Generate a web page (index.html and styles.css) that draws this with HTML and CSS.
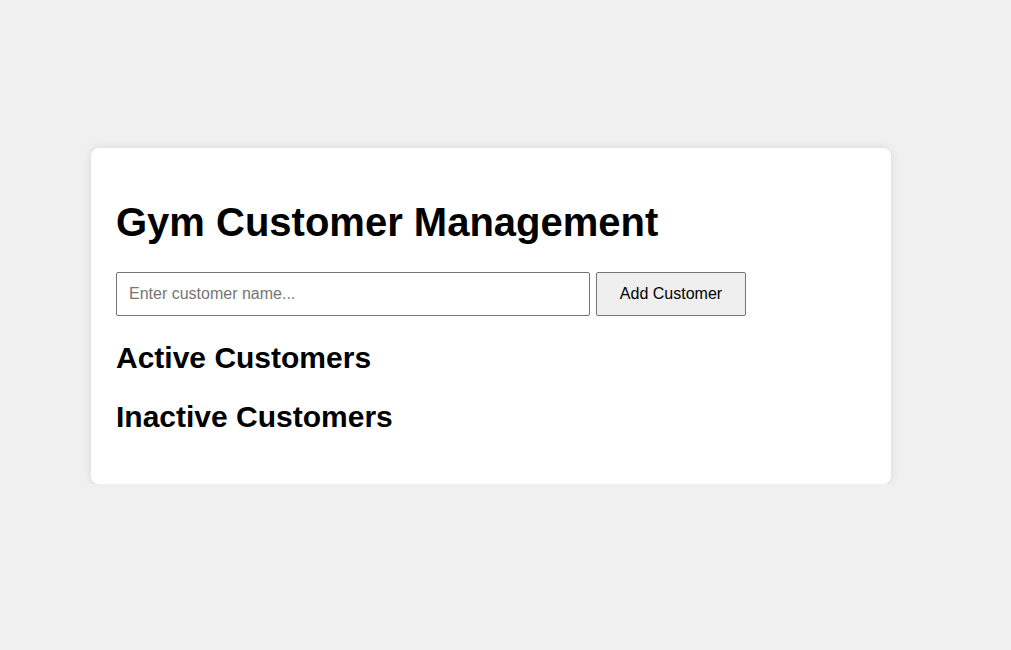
FILE: index.html
```html
<!DOCTYPE html>
<html>
<head>
<meta charset="utf-8">
<link rel="stylesheet" href="styles.css">
</head>
<body>
<div class="card">
  <h1>Gym Customer Management</h1>
  <div class="add-row">
    <input class="name-input" type="text" placeholder="Enter customer name...">
    <button class="add-btn">Add Customer</button>
  </div>
  <h2>Active Customers</h2>
  <h2>Inactive Customers</h2>
</div>
</body>
</html>
```
FILE: styles.css
```css
html, body {
  margin: 0;
  padding: 0;
  background: #f0f0f0;
  font-family: "Liberation Sans", Arial, sans-serif;
}
body {
  padding: 148px 0 0 91px;
}
.card {
  width: 750px;
  padding: 25px;
  background: #fff;
  border-radius: 8px;
  box-shadow: 0 0 10px rgba(0,0,0,0.1);
}
h1 {
  font-size: 40px;
  margin: 27px 0 27px;
}
.add-row {
  display: flex;
  gap: 6px;
}
.name-input {
  width: 448px;
  padding: 12px;
  font-size: 16px;
  font-family: "Liberation Sans", Arial, sans-serif;
  border: 1px solid #767676;
  border-radius: 2px;
  margin: 0;
}
.name-input::placeholder {
  color: #757575;
}
.add-btn {
  width: 150px;
  height: 44px;
  font-size: 16px;
  font-family: "Liberation Sans", Arial, sans-serif;
  background: #efefef;
  border: 1px solid #767676;
  border-radius: 2px;
  color: #000;
  margin: 0;
}
h2 {
  font-size: 30px;
  margin: 25px 0;
}
```
